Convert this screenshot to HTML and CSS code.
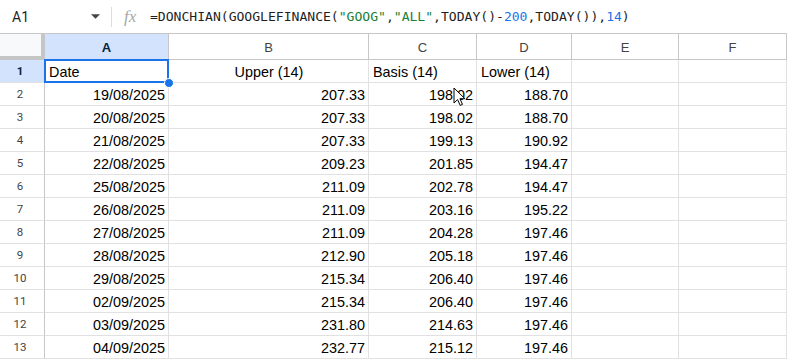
FILE: index.html
```html
<!DOCTYPE html>
<html lang="en">
<head>
    <meta charset="UTF-8">
    <meta name="viewport" content="width=device-width, initial-scale=1.0">
    <title>Donchian sheet</title>
    <link rel="stylesheet" href="styles.css">
</head>
<body>
    <div class="formula-bar">
        <div class="name-box">
            <span class="cell-ref">A1</span>
            <svg class="caret" viewBox="0 0 10 5"><path d="M0 0h10L5 5z" fill="#444"/></svg>
        </div>
        <div class="divider"></div>
        <span class="fx">fx</span>
        <div class="formula">=DONCHIAN(GOOGLEFINANCE(<span class="str">"GOOG"</span>,<span class="str">"ALL"</span>,TODAY()-<span class="num">200</span>,TODAY()),<span class="num">14</span>)</div>
    </div>

    <div class="sheet">
        <div class="corner"></div>
        <div class="col-head active">A</div>
        <div class="col-head">B</div>
        <div class="col-head">C</div>
        <div class="col-head">D</div>
        <div class="col-head">E</div>
        <div class="col-head">F</div>

        <div class="row-head active">1</div>
        <div class="cell left selected">Date<span class="handle"></span></div>
        <div class="cell center">Upper (14)</div>
        <div class="cell left">Basis (14)</div>
        <div class="cell left">Lower (14)</div>
        <div class="cell"></div>
        <div class="cell"></div>

        <div class="row-head">2</div>
        <div class="cell">19/08/2025</div><div class="cell">207.33</div><div class="cell">198.02</div><div class="cell">188.70</div><div class="cell"></div><div class="cell"></div>
        <div class="row-head">3</div>
        <div class="cell">20/08/2025</div><div class="cell">207.33</div><div class="cell">198.02</div><div class="cell">188.70</div><div class="cell"></div><div class="cell"></div>
        <div class="row-head">4</div>
        <div class="cell">21/08/2025</div><div class="cell">207.33</div><div class="cell">199.13</div><div class="cell">190.92</div><div class="cell"></div><div class="cell"></div>
        <div class="row-head">5</div>
        <div class="cell">22/08/2025</div><div class="cell">209.23</div><div class="cell">201.85</div><div class="cell">194.47</div><div class="cell"></div><div class="cell"></div>
        <div class="row-head">6</div>
        <div class="cell">25/08/2025</div><div class="cell">211.09</div><div class="cell">202.78</div><div class="cell">194.47</div><div class="cell"></div><div class="cell"></div>
        <div class="row-head">7</div>
        <div class="cell">26/08/2025</div><div class="cell">211.09</div><div class="cell">203.16</div><div class="cell">195.22</div><div class="cell"></div><div class="cell"></div>
        <div class="row-head">8</div>
        <div class="cell">27/08/2025</div><div class="cell">211.09</div><div class="cell">204.28</div><div class="cell">197.46</div><div class="cell"></div><div class="cell"></div>
        <div class="row-head">9</div>
        <div class="cell">28/08/2025</div><div class="cell">212.90</div><div class="cell">205.18</div><div class="cell">197.46</div><div class="cell"></div><div class="cell"></div>
        <div class="row-head">10</div>
        <div class="cell">29/08/2025</div><div class="cell">215.34</div><div class="cell">206.40</div><div class="cell">197.46</div><div class="cell"></div><div class="cell"></div>
        <div class="row-head">11</div>
        <div class="cell">02/09/2025</div><div class="cell">215.34</div><div class="cell">206.40</div><div class="cell">197.46</div><div class="cell"></div><div class="cell"></div>
        <div class="row-head">12</div>
        <div class="cell">03/09/2025</div><div class="cell">231.80</div><div class="cell">214.63</div><div class="cell">197.46</div><div class="cell"></div><div class="cell"></div>
        <div class="row-head">13</div>
        <div class="cell">04/09/2025</div><div class="cell">232.77</div><div class="cell">215.12</div><div class="cell">197.46</div><div class="cell"></div><div class="cell"></div>
    </div>

    <!-- mouse pointer sitting over C2 -->
    <svg class="pointer" viewBox="0 0 13 20">
        <path d="M1 1v15l3.6-3.4 2.6 5.8 2.3-1-2.6-5.7h5z" fill="#fff" stroke="#000" stroke-width="1" stroke-linejoin="round"/>
    </svg>
</body>
</html>
```

FILE: styles.css
```css
* {
    box-sizing: border-box;
    margin: 0;
    padding: 0;
}

body {
    font-family: 'Liberation Sans', Arial, sans-serif;
    background: #fff;
    color: #000;
    width: 787px;
    height: 359px;
    overflow: hidden;
    position: relative;
}

/* formula bar */
.formula-bar {
    height: 34px;
    display: flex;
    align-items: center;
    border-bottom: 1px solid #c7c7c7;
}

.name-box {
    width: 104px;
    display: flex;
    align-items: center;
    padding-left: 12px;
}

.cell-ref {
    font-family: Roboto, 'Liberation Sans', sans-serif;
    font-size: 14px;
    color: #1f1f1f;
    flex-grow: 1;
}

.caret {
    width: 9px;
    height: 5px;
    margin-right: 4px;
}

.divider {
    width: 1px;
    height: 20px;
    background: #dadce0;
    margin-left: 7px;
}

.fx {
    font-family: 'Liberation Serif', serif;
    font-style: italic;
    font-size: 17px;
    color: #a8a8a8;
    margin-left: 12px;
    width: 26px;
}

.formula {
    font-family: 'DejaVu Sans Mono', monospace;
    font-size: 13.1px;
    color: #1f1f1f;
    letter-spacing: -0.02px;
    white-space: nowrap;
}

.formula .str {
    color: #188038;
}

.formula .num {
    color: #1a73e8;
}

/* grid */
.sheet {
    display: grid;
    grid-template-columns: 45px 124px 200px 108px 95px 107px 1fr;
    grid-template-rows: 26px;
    grid-auto-rows: 23px;
}

.corner {
    background: #f8f9fa;
    border-right: 4px solid #c4c7c5;
    border-bottom: 4px solid #c4c7c5;
}

.col-head {
    font-family: 'Liberation Sans', Arial, sans-serif;
    font-size: 13px;
    color: #444;
    display: flex;
    align-items: center;
    justify-content: center;
    border-right: 1px solid #c7c7c7;
    border-bottom: 1px solid #c7c7c7;
    padding-top: 1px;
}

.col-head.active {
    background: #d3e3fd;
    color: #0b1e3f;
    font-weight: bold;
}

.row-head {
    font-family: Roboto, 'Liberation Sans', sans-serif;
    font-size: 11.5px;
    color: #444;
    display: flex;
    align-items: center;
    justify-content: center;
    padding-right: 4px;
    border-right: 1px solid #c7c7c7;
    border-bottom: 1px solid #e1e1e1;
}

.row-head.active {
    background: #d3e3fd;
    color: #0b1e3f;
    font-weight: bold;
}

.cell {
    font-size: 14.4px;
    line-height: 17px;
    display: flex;
    align-items: flex-end;
    justify-content: flex-end;
    padding: 0 3px 1px 4px;
    border-right: 1px solid #e1e1e1;
    border-bottom: 1px solid #e1e1e1;
    white-space: nowrap;
}

.cell.left {
    justify-content: flex-start;
}

.cell.center {
    justify-content: center;
}

.cell.selected {
    position: relative;
}

.cell.selected::after {
    content: "";
    position: absolute;
    top: -1px;
    left: -1px;
    right: -1px;
    bottom: -1px;
    border: 2px solid #1a73e8;
}

.handle {
    position: absolute;
    right: -6px;
    bottom: -6px;
    width: 10px;
    height: 10px;
    border-radius: 50%;
    background: #1a73e8;
    border: 1px solid #fff;
    z-index: 2;
}

.pointer {
    position: absolute;
    left: 453px;
    top: 87px;
    width: 13px;
    height: 20px;
}
```
